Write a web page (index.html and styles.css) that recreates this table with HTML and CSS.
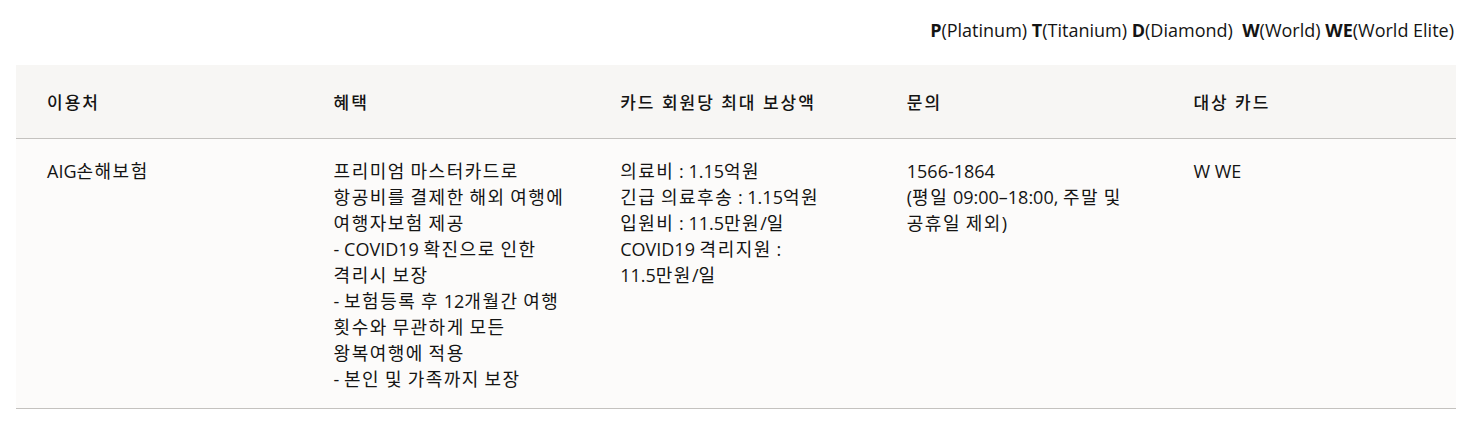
FILE: index.html
```html
<!DOCTYPE html>
<html lang="ko">
<head>
<meta charset="utf-8">
<link rel="stylesheet" href="styles.css">
</head>
<body>
<div class="page">
  <p class="legend"><b>P</b>(Platinum) <b>T</b>(Titanium) <b>D</b>(Diamond)&nbsp; <b>W</b>(World) <b>WE</b>(World Elite)</p>
  <div class="table">
    <div class="row head">
      <div class="cell">이용처</div>
      <div class="cell">혜택</div>
      <div class="cell">카드 회원당 최대 보상액</div>
      <div class="cell">문의</div>
      <div class="cell">대상 카드</div>
    </div>
    <div class="row body">
      <div class="cell">AIG<span class="k">손해보험</span></div>
      <div class="cell"><span class="k">프리미엄</span> <span class="k">마스터카드로</span><br><span class="k">항공비를</span> <span class="k">결제한</span> <span class="k">해외</span> <span class="k">여행에</span><br><span class="k">여행자보험</span> <span class="k">제공</span><br>- COVID19 <span class="k">확진으로</span> <span class="k">인한</span><br><span class="k">격리시</span> <span class="k">보장</span><br>- <span class="k">보험등록</span> <span class="k">후</span> 12<span class="k">개월간</span> <span class="k">여행</span><br><span class="k">횟수와</span> <span class="k">무관하게</span> <span class="k">모든</span><br><span class="k">왕복여행에</span> <span class="k">적용</span><br>- <span class="k">본인</span> <span class="k">및</span> <span class="k">가족까지</span> <span class="k">보장</span></div>
      <div class="cell"><span class="k">의료비</span> : 1.15<span class="k">억원</span><br><span class="k">긴급</span> <span class="k">의료후송</span> : 1.15<span class="k">억원</span><br><span class="k">입원비</span> : 11.5<span class="k">만원</span>/<span class="k">일</span><br>COVID19 <span class="k">격리지원</span> :<br>11.5<span class="k">만원</span>/<span class="k">일</span></div>
      <div class="cell">1566-1864<br>(<span class="k">평일</span> 09:00–18:00, <span class="k">주말</span> <span class="k">및</span><br><span class="k">공휴일</span> <span class="k">제외</span>)</div>
      <div class="cell">W WE</div>
    </div>
  </div>
</div>
</body>
</html>
```
FILE: styles.css
```css
* { box-sizing: border-box; }
html, body { margin: 0; padding: 0; background: #fff; }
body {
  font-family: "Open Sans", "Noto Sans CJK KR", sans-serif;
  color: #141413;
  font-size: 18px;
}
.page { padding: 0 22px 0 16px; width: 1478px; }
.legend {
  margin: 0;
  height: 65px;
  display: flex;
  align-items: center;
  justify-content: flex-end;
  padding: 0 2px 6px 0;
  font-size: 18px;
  white-space: pre;
}
.legend b { font-weight: 700; }
.table { width: 1440px; }
.row {
  display: grid;
  grid-template-columns: repeat(5, 286.6px);
  padding-left: 31px;
}
.head {
  background: #f7f6f4;
  height: 74px;
  align-items: center;
  border-bottom: 1px solid #c4c2bf;
  font-size: 17px;
  font-weight: 500;
  letter-spacing: 2px;
  padding-bottom: 1px;
}
.body {
  background: #fcfbfa;
  padding-top: 19px;
  padding-bottom: 16px;
  line-height: 26px;
  border-bottom: 1px solid #c4c2bf;
}
.cell { padding-right: 10px; }
.k { letter-spacing: 1.5px; }
```
